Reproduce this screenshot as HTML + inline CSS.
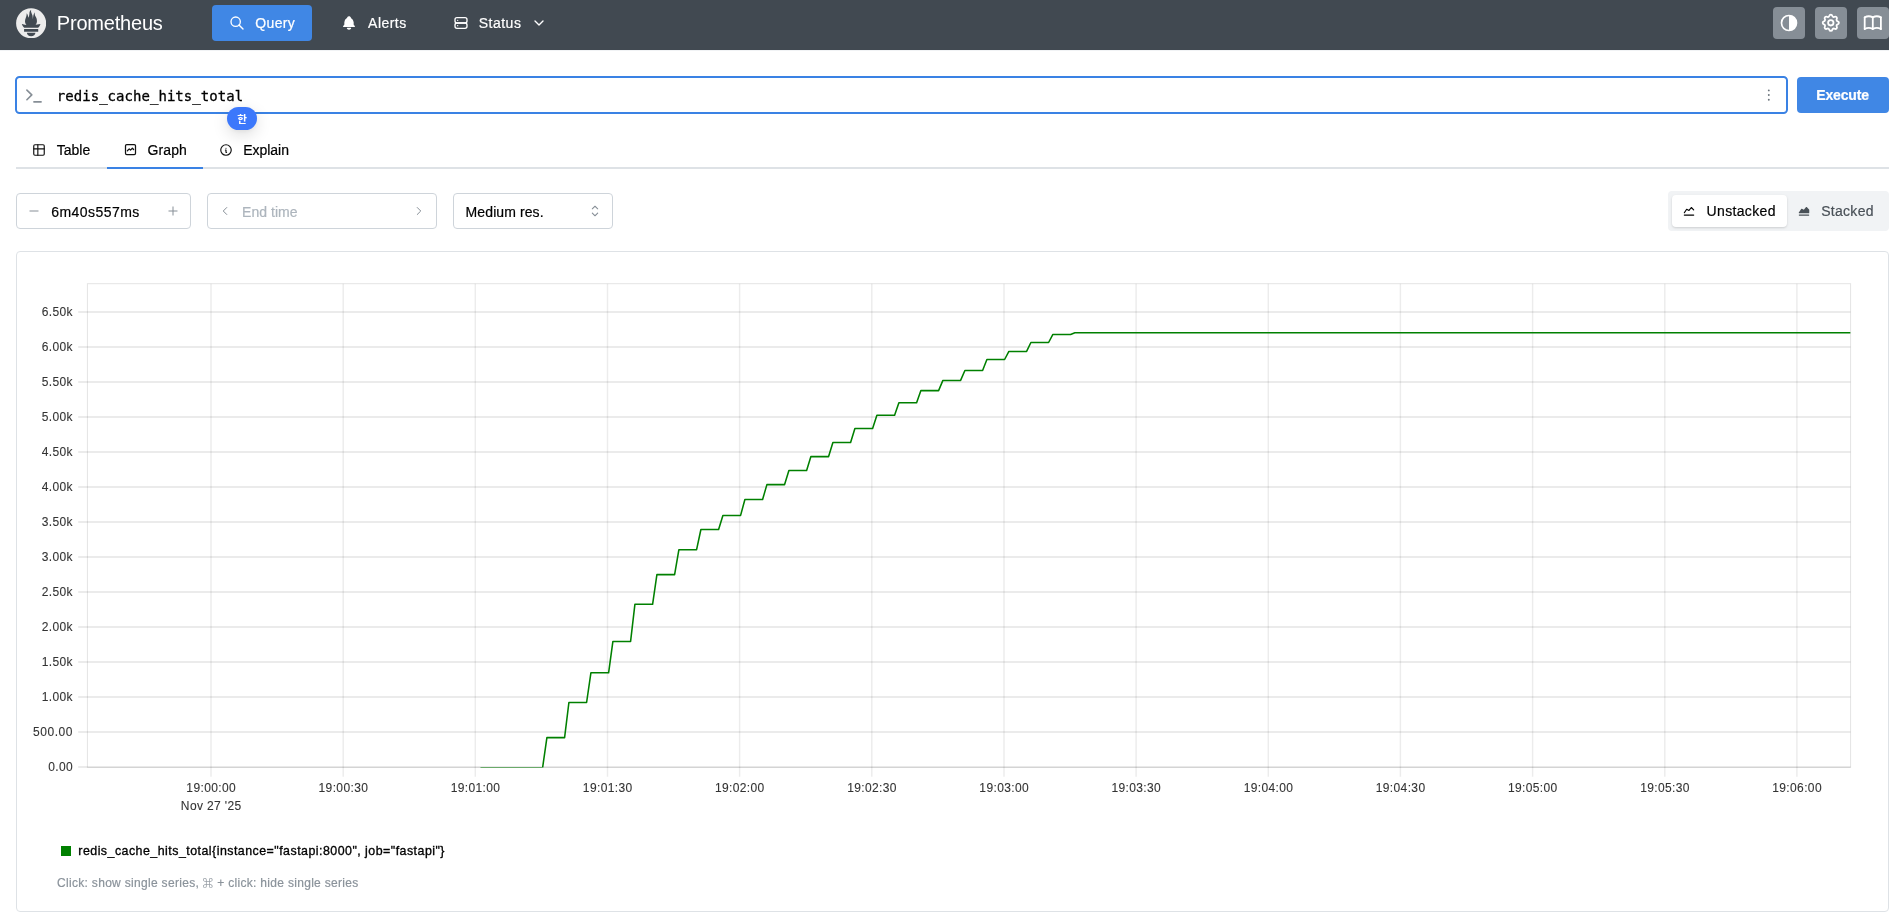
<!DOCTYPE html>
<html lang="en"><head><meta charset="utf-8"><title>Prometheus Time Series Collection and Processing Server</title>
<style>
html,body{margin:0;padding:0;background:#fff;}
body{width:1889px;height:918px;overflow:hidden;position:relative;font-family:"Liberation Sans", "Noto Sans CJK KR", sans-serif;-webkit-font-smoothing:antialiased;}
div,svg{box-sizing:border-box;}
.abs{position:absolute;}
</style></head><body><div id="root" style="position:absolute;left:0;top:0;width:1889px;height:918px;will-change:transform">
<div class="abs" style="left:0;top:49.6px;width:1889px;height:1.4px;background:#f1f3f5"></div>
<div class="abs" style="left:0;top:0;width:1889px;height:49.7px;background:rgb(65,73,81)"></div>
<svg style="position:absolute;left:15.8px;top:7.9px" width="30.3" height="30.3" viewBox="0 0 113.333 114"><path fill="#ececec" d="M56.667,0.667C25.372,0.667,0,26.036,0,57.332c0,31.295,25.372,56.666,56.667,56.666s56.666-25.371,56.666-56.666C113.333,26.036,87.961,0.667,56.667,0.667z M56.667,106.722c-8.904,0-16.123-5.948-16.123-13.283H72.79C72.79,100.773,65.571,106.722,56.667,106.722z M83.297,89.04H30.034v-9.658h53.264V89.04z M83.106,74.411h-52.92c-0.176-0.203-0.356-0.403-0.526-0.609c-5.452-6.62-6.736-10.076-7.983-13.598c-0.021-0.116,6.611,1.355,11.314,2.413c0,0,2.42,0.56,5.958,1.205c-3.397-3.982-5.414-9.044-5.414-14.218c0-11.359,8.712-21.285,5.569-29.308c3.059,0.249,6.331,6.456,6.552,16.161c3.252-4.494,4.613-12.701,4.613-17.733c0-5.21,3.433-11.262,6.867-11.469c-3.061,5.045,0.793,9.37,4.219,20.099c1.285,4.03,1.121,10.812,2.113,15.113C63.797,33.534,65.333,20.5,71,16c-2.5,5.667,0.37,12.758,2.333,16.167c3.167,5.5,5.087,9.667,5.087,17.548c0,5.284-1.951,10.259-5.242,14.148c3.742-0.702,6.326-1.335,6.326-1.335l12.152-2.371C91.657,60.156,89.891,67.418,83.106,74.411z"/></svg>
<div style="position:absolute;left:56.8px;top:13.27px;font-size:20px;line-height:20px;color:#fff;letter-spacing:-0.2px;font-weight:400;white-space:pre;-webkit-text-stroke:0.2px;-webkit-text-stroke:0;">Prometheus</div>
<div class="abs" style="left:212px;top:5px;width:100px;height:36px;border-radius:4px;background:#4087e5"></div>
<svg style="position:absolute;left:228.8px;top:15px;color:#fff;" width="16" height="16" viewBox="0 0 24 24" fill="none" stroke="currentColor" stroke-width="2" stroke-linecap="round" stroke-linejoin="round"><path d="M10 10m-7 0a7 7 0 1 0 14 0a7 7 0 1 0 -14 0"/><path d="M21 21l-6 -6"/></svg>
<div style="position:absolute;left:255.3px;top:16.05px;font-size:14px;line-height:14px;color:#fff;letter-spacing:0.35px;font-weight:400;white-space:pre;-webkit-text-stroke:0.2px;">Query</div>
<svg style="position:absolute;left:341px;top:15px;color:#fff;" width="16" height="16" viewBox="0 0 24 24" fill="none" stroke="currentColor" stroke-width="2" stroke-linecap="round" stroke-linejoin="round"><path stroke="none" fill="currentColor" d="M14.235 19c.865 0 1.322 1.024 .745 1.668a3.992 3.992 0 0 1 -2.98 1.332a3.992 3.992 0 0 1 -2.98 -1.332c-.552 -.616 -.158 -1.579 .634 -1.661l.11 -.006h4.471z"/><path stroke="none" fill="currentColor" d="M12 2c1.358 0 2.506 .903 2.875 2.141l.046 .171l.008 .043a8.013 8.013 0 0 1 4.024 6.069l.028 .287l.019 .289v2.931l.021 .136a3 3 0 0 0 1.143 1.847l.167 .117l.162 .099c.86 .487 .56 1.766 -.377 1.864l-.116 .006h-16c-1.028 0 -1.387 -1.364 -.493 -1.87a3 3 0 0 0 1.472 -2.063l.021 -.143l.001 -2.97a8 8 0 0 1 3.821 -6.454l.248 -.146l.01 -.043a3.003 3.003 0 0 1 2.562 -2.29l.182 -.017l.176 -.004z"/></svg>
<div style="position:absolute;left:368.1px;top:16.05px;font-size:14px;line-height:14px;color:#fff;letter-spacing:0.45px;font-weight:400;white-space:pre;-webkit-text-stroke:0.2px;">Alerts</div>
<svg style="position:absolute;left:452.9px;top:15px;color:#fff;" width="16" height="16" viewBox="0 0 24 24" fill="none" stroke="currentColor" stroke-width="2" stroke-linecap="round" stroke-linejoin="round"><path d="M3 4m0 3a3 3 0 0 1 3 -3h12a3 3 0 0 1 3 3v2a3 3 0 0 1 -3 3h-12a3 3 0 0 1 -3 -3z"/><path d="M3 12m0 3a3 3 0 0 1 3 -3h12a3 3 0 0 1 3 3v2a3 3 0 0 1 -3 3h-12a3 3 0 0 1 -3 -3z"/><path d="M7 8l0 .01"/><path d="M7 16l0 .01"/></svg>
<div style="position:absolute;left:478.7px;top:16.05px;font-size:14px;line-height:14px;color:#fff;letter-spacing:0.5px;font-weight:400;white-space:pre;-webkit-text-stroke:0.2px;">Status</div>
<svg style="position:absolute;left:531.25px;top:15px;color:#fff;" width="16" height="16" viewBox="0 0 24 24" fill="none" stroke="currentColor" stroke-width="2" stroke-linecap="round" stroke-linejoin="round"><path d="M6 9l6 6l6 -6"/></svg>
<div class="abs" style="left:1773px;top:7px;width:32px;height:32px;border-radius:4px;background:#868e96"></div>
<svg style="position:absolute;left:1779.0px;top:13.0px;color:#fff;" width="20" height="20" viewBox="0 0 24 24" fill="none" stroke="currentColor" stroke-width="2" stroke-linecap="round" stroke-linejoin="round"><path stroke="none" fill="currentColor" fill-rule="evenodd" d="M12 2a10 10 0 0 1 0 20a10 10 0 0 1 0 -20zM12 4a8 8 0 0 0 0 16z"/></svg>
<div class="abs" style="left:1815px;top:7px;width:32px;height:32px;border-radius:4px;background:#868e96"></div>
<svg style="position:absolute;left:1820.2px;top:12.2px;color:#fff;" width="21.6" height="21.6" viewBox="0 0 24 24" fill="none" stroke="currentColor" stroke-width="2" stroke-linecap="round" stroke-linejoin="round"><path d="M10.325 4.317c.426 -1.756 2.924 -1.756 3.35 0a1.724 1.724 0 0 0 2.573 1.066c1.543 -.94 3.31 .826 2.37 2.37a1.724 1.724 0 0 0 1.065 2.572c1.756 .426 1.756 2.924 0 3.35a1.724 1.724 0 0 0 -1.066 2.573c.94 1.543 -.826 3.31 -2.37 2.37a1.724 1.724 0 0 0 -2.572 1.065c-.426 1.756 -2.924 1.756 -3.35 0a1.724 1.724 0 0 0 -2.573 -1.066c-1.543 .94 -3.31 -.826 -2.37 -2.37a1.724 1.724 0 0 0 -1.065 -2.572c-1.756 -.426 -1.756 -2.924 0 -3.35a1.724 1.724 0 0 0 1.066 -2.573c-.94 -1.543 .826 -3.31 2.37 -2.37c1 .608 2.296 .07 2.572 -1.065z"/><path d="M9 12a3 3 0 1 0 6 0a3 3 0 0 0 -6 0"/></svg>
<div class="abs" style="left:1857px;top:7px;width:32px;height:32px;border-radius:4px;background:#868e96"></div>
<svg style="position:absolute;left:1862.2px;top:12.2px;color:#fff;" width="21.6" height="21.6" viewBox="0 0 24 24" fill="none" stroke="currentColor" stroke-width="2" stroke-linecap="round" stroke-linejoin="round"><path d="M3 19a9 9 0 0 1 9 0a9 9 0 0 1 9 0"/><path d="M3 6a9 9 0 0 1 9 0a9 9 0 0 1 9 0"/><path d="M3 6l0 13"/><path d="M12 6l0 13"/><path d="M21 6l0 13"/></svg>
<div class="abs" style="left:14.9px;top:75.7px;width:1772.9px;height:38.3px;border:2px solid #3a82e4;border-radius:4.5px;background:#fff"></div>
<svg class="abs" style="left:20px;top:84px" width="28" height="24" viewBox="20 84 28 24" fill="none" stroke="#868e96" stroke-width="1.6" stroke-linecap="round" stroke-linejoin="round"><path d="M26.9 90.1L31.8 94.9L26.9 99.7"/><path d="M33.9 101.9H41.1"/></svg>
<div class="abs" style="left:56.8px;top:85.7px;-webkit-text-stroke:0.3px #000;letter-spacing:0.04px;font-family:'DejaVu Sans Mono','Liberation Mono',monospace;font-size:14px;line-height:21px;color:#000;white-space:pre">redis_cache_hits_total</div>
<svg class="abs" style="left:1764px;top:86px" width="10" height="18" viewBox="0 0 10 18"><g fill="#6c757d"><circle cx="4.8" cy="4.4" r="0.95"/><circle cx="4.8" cy="9.0" r="0.95"/><circle cx="4.8" cy="13.8" r="0.95"/></g></svg>
<div class="abs" style="left:1797px;top:77px;width:92px;height:36px;border-radius:4px;background:#4087e5"></div>
<div style="position:absolute;left:1816.2px;top:88.05px;font-size:14px;line-height:14px;color:#fff;letter-spacing:-0.15px;font-weight:700;white-space:pre;-webkit-text-stroke:0.2px;">Execute</div>
<div class="abs" style="left:227px;top:106.8px;width:30px;height:23.2px;border-radius:12px;background:#3c78fb;box-shadow:0 5px 16px rgba(0,0,0,0.13),0 1px 5px rgba(0,0,0,0.06)"></div>
<div class="abs" style="left:227px;top:106.8px;width:30px;height:23.2px;line-height:23.2px;text-align:center;color:#fff;font-weight:700;font-size:10.5px;font-family:'Noto Sans CJK KR','NanumGothic',sans-serif">한</div>
<div class="abs" style="left:15.5px;top:166.7px;width:1873.5px;height:2px;background:#dee2e6"></div>
<div class="abs" style="left:107px;top:166.7px;width:96px;height:2px;background:#3a82e4"></div>
<svg style="position:absolute;left:32px;top:143px;color:#111;" width="14" height="14" viewBox="0 0 24 24" fill="none" stroke="currentColor" stroke-width="2" stroke-linecap="round" stroke-linejoin="round"><path d="M3 5a2 2 0 0 1 2 -2h14a2 2 0 0 1 2 2v14a2 2 0 0 1 -2 2h-14a2 2 0 0 1 -2 -2v-14z"/><path d="M3 10h18"/><path d="M10 3v18"/></svg>
<div style="position:absolute;left:56.8px;top:143.05px;font-size:14px;line-height:14px;color:#000;letter-spacing:0.0px;font-weight:400;white-space:pre;-webkit-text-stroke:0.2px;">Table</div>
<svg style="position:absolute;left:123.0px;top:141.9px;color:#111;" width="15" height="15" viewBox="0 0 24 24" fill="none" stroke="currentColor" stroke-width="2" stroke-linecap="round" stroke-linejoin="round"><path d="M4 18v-12a2 2 0 0 1 2 -2h12a2 2 0 0 1 2 2v12a2 2 0 0 1 -2 2h-12a2 2 0 0 1 -2 -2z"/><path d="M7 14l3 -3l2 2l3 -3l2 2"/></svg>
<div style="position:absolute;left:147.5px;top:143.05px;font-size:14px;line-height:14px;color:#000;letter-spacing:0.1px;font-weight:400;white-space:pre;-webkit-text-stroke:0.2px;">Graph</div>
<svg style="position:absolute;left:219px;top:143px;color:#111;" width="14" height="14" viewBox="0 0 24 24" fill="none" stroke="currentColor" stroke-width="2" stroke-linecap="round" stroke-linejoin="round"><path d="M3 12a9 9 0 1 0 18 0a9 9 0 0 0 -18 0"/><path d="M12 9h.01"/><path d="M11 12h1v4h1"/></svg>
<div style="position:absolute;left:243.2px;top:143.05px;font-size:14px;line-height:14px;color:#000;letter-spacing:-0.03px;font-weight:400;white-space:pre;-webkit-text-stroke:0.2px;">Explain</div>
<div class="abs" style="left:16px;top:193px;width:174.7px;height:35.7px;border:1px solid #ced4da;border-radius:4px;background:#fff"></div>
<svg style="position:absolute;left:27.1px;top:204px;color:#868e96;" width="14" height="14" viewBox="0 0 24 24" fill="none" stroke="currentColor" stroke-width="1.7" stroke-linecap="round" stroke-linejoin="round"><path d="M5 12l14 0"/></svg>
<div style="position:absolute;left:51.2px;top:205.35px;font-size:14px;line-height:14px;color:#000;letter-spacing:0.46px;font-weight:400;white-space:pre;-webkit-text-stroke:0.2px;">6m40s557ms</div>
<svg style="position:absolute;left:166.1px;top:204px;color:#868e96;" width="14" height="14" viewBox="0 0 24 24" fill="none" stroke="currentColor" stroke-width="1.7" stroke-linecap="round" stroke-linejoin="round"><path d="M12 5l0 14"/><path d="M5 12l14 0"/></svg>
<div class="abs" style="left:207.2px;top:193px;width:229.5px;height:35.7px;border:1px solid #ced4da;border-radius:4px;background:#fff"></div>
<svg style="position:absolute;left:218px;top:204.4px;color:#868e96;" width="14" height="14" viewBox="0 0 24 24" fill="none" stroke="currentColor" stroke-width="1.7" stroke-linecap="round" stroke-linejoin="round"><path d="M15 6l-6 6l6 6"/></svg>
<div style="position:absolute;left:242.0px;top:205.25px;font-size:14px;line-height:14px;color:#adb5bd;letter-spacing:0.05px;font-weight:400;white-space:pre;-webkit-text-stroke:0.2px;">End time</div>
<svg style="position:absolute;left:412.4px;top:204.2px;color:#868e96;" width="14" height="14" viewBox="0 0 24 24" fill="none" stroke="currentColor" stroke-width="1.7" stroke-linecap="round" stroke-linejoin="round"><path d="M9 6l6 6l-6 6"/></svg>
<div class="abs" style="left:453.2px;top:193px;width:159.5px;height:35.7px;border:1px solid #ced4da;border-radius:4px;background:#fff"></div>
<div style="position:absolute;left:465.6px;top:205.25px;font-size:14px;line-height:14px;color:#000;letter-spacing:0.1px;font-weight:400;white-space:pre;-webkit-text-stroke:0.2px;">Medium res.</div>
<svg class="abs" style="left:586px;top:202px;color:#868e96" width="18" height="18" viewBox="0 0 15 15" fill="currentColor"><path fill-rule="evenodd" clip-rule="evenodd" d="M4.93179 5.43179C4.75605 5.60753 4.75605 5.89245 4.93179 6.06819C5.10753 6.24392 5.39245 6.24392 5.56819 6.06819L7.49999 4.13638L9.43179 6.06819C9.60753 6.24392 9.89245 6.24392 10.0682 6.06819C10.2439 5.89245 10.2439 5.60753 10.0682 5.43179L7.81819 3.18179C7.73379 3.0974 7.61933 3.04999 7.49999 3.04999C7.38064 3.04999 7.26618 3.0974 7.18179 3.18179L4.93179 5.43179ZM10.0682 9.56819C10.2439 9.39245 10.2439 9.10753 10.0682 8.93179C9.89245 8.75606 9.60753 8.75606 9.43179 8.93179L7.49999 10.8636L5.56819 8.93179C5.39245 8.75606 5.10753 8.75606 4.93179 8.93179C4.75605 9.10753 4.75605 9.39245 4.93179 9.56819L7.18179 11.8182C7.35753 11.9939 7.64245 11.9939 7.81819 11.8182L10.0682 9.56819Z"/></svg>
<div class="abs" style="left:1668px;top:191px;width:221px;height:40px;border-radius:4px;background:#f1f3f5"></div>
<div class="abs" style="left:1672px;top:195px;width:115px;height:32px;border-radius:4px;background:#fff;box-shadow:0 1px 3px rgba(0,0,0,0.1),0 1px 2px rgba(0,0,0,0.06)"></div>
<svg style="position:absolute;left:1682.3px;top:204.3px;color:#000;" width="14" height="14" viewBox="0 0 24 24" fill="none" stroke="currentColor" stroke-width="2" stroke-linecap="round" stroke-linejoin="round"><path d="M4 19l16 0"/><path d="M4 15l4 -6l4 2l4 -5l4 4"/></svg>
<div style="position:absolute;left:1706.6px;top:204.15px;font-size:14px;line-height:14px;color:#000;letter-spacing:0.34px;font-weight:400;white-space:pre;-webkit-text-stroke:0.2px;">Unstacked</div>
<svg style="position:absolute;left:1797.2px;top:204.3px;color:#495057;" width="14" height="14" viewBox="0 0 24 24" fill="none" stroke="currentColor" stroke-width="2" stroke-linecap="round" stroke-linejoin="round"><path stroke="none" fill="currentColor" d="M20 18a1 1 0 0 1 .117 1.993l-.117 .007h-16a1 1 0 0 1 -.117 -1.993l.117 -.007h16z"/><path stroke="none" fill="currentColor" d="M15.22 5.375a1 1 0 0 1 1.393 -.165l.094 .083l4 4a1 1 0 0 1 .284 .576l.009 .131v5a1 1 0 0 1 -.883 .993l-.117 .007h-16.022l-.11 -.009l-.11 -.02l-.107 -.034l-.105 -.046l-.1 -.059l-.094 -.07l-.06 -.055l-.072 -.082l-.064 -.089l-.054 -.096l-.016 -.035l-.04 -.103l-.027 -.106l-.015 -.108l-.004 -.11l.009 -.11l.019 -.105c.01 -.04 .022 -.077 .035 -.112l.046 -.105l.059 -.1l4 -6a1 1 0 0 1 1.165 -.39l.114 .05l3.277 1.638l3.495 -4.369z"/></svg>
<div style="position:absolute;left:1821.2px;top:204.15px;font-size:14px;line-height:14px;color:#495057;letter-spacing:0.29px;font-weight:400;white-space:pre;-webkit-text-stroke:0.2px;">Stacked</div>
<div class="abs" style="left:16px;top:251.4px;width:1873px;height:660.6px;border:1px solid #dee2e6;border-radius:4px;background:#fff"></div>
<svg class="abs" style="left:0;top:240px" width="1889" height="600" viewBox="0 240 1889 600"><g stroke="rgba(0,0,0,0.078)" stroke-width="1.8" fill="none"><path d="M78.2 767.0H1850.6"/><path d="M78.2 732.0H1850.6"/><path d="M78.2 697.0H1850.6"/><path d="M78.2 662.0H1850.6"/><path d="M78.2 627.0H1850.6"/><path d="M78.2 592.0H1850.6"/><path d="M78.2 557.0H1850.6"/><path d="M78.2 522.0H1850.6"/><path d="M78.2 487.0H1850.6"/><path d="M78.2 452.0H1850.6"/><path d="M78.2 417.0H1850.6"/><path d="M78.2 382.0H1850.6"/><path d="M78.2 347.0H1850.6"/><path d="M78.2 312.0H1850.6"/></g><g stroke="rgba(0,0,0,0.075)" stroke-width="1.5" fill="none"><path d="M211.0 283.7V776.8"/><path d="M343.2 283.7V776.8"/><path d="M475.3 283.7V776.8"/><path d="M607.5 283.7V776.8"/><path d="M739.6 283.7V776.8"/><path d="M871.8 283.7V776.8"/><path d="M1004.0 283.7V776.8"/><path d="M1136.1 283.7V776.8"/><path d="M1268.3 283.7V776.8"/><path d="M1400.4 283.7V776.8"/><path d="M1532.6 283.7V776.8"/><path d="M1664.8 283.7V776.8"/><path d="M1796.9 283.7V776.8"/></g><rect x="87.4" y="283.7" width="1763.2" height="483.7" fill="none" stroke="rgba(0,0,0,0.11)" stroke-width="1"/><clipPath id="pc"><rect x="87.4" y="283.7" width="1763.2" height="483.9"/></clipPath><path clip-path="url(#pc)" d="M480.5 767.7H542.6L546.9 737.6H564.6L568.9 702.5H586.6L590.9 672.8H608.6L612.9 641.4H630.6L634.9 604.3H652.6L656.9 574.6H674.6L678.9 549.7H696.6L700.9 529.5H718.6L722.9 515.4H740.6L744.9 499.5H762.6L766.9 484.6H784.6L788.9 470.5H806.6L810.9 456.6H828.6L832.9 442.5H850.6L854.9 428.4H872.6L876.9 415.3H894.6L898.9 402.7H916.6L920.9 390.6H938.6L942.9 380.4H960.6L964.9 370.5H982.6L986.9 359.5H1004.6L1008.9 351.4H1026.6L1030.9 342.5H1048.6L1052.9 334.4H1070.6L1074.9 332.8H1850.6" fill="none" stroke="#008000" stroke-width="1.55" stroke-linejoin="round"/><g font-family='"Liberation Sans", sans-serif' font-size="12" fill="#333" stroke="#333" stroke-width="0.1" letter-spacing="0.37"><text x="73.0" y="771.3" text-anchor="end">0.00</text><text x="73.0" y="736.3" text-anchor="end" letter-spacing="0.55">500.00</text><text x="73.0" y="701.3" text-anchor="end">1.00k</text><text x="73.0" y="666.3" text-anchor="end">1.50k</text><text x="73.0" y="631.3" text-anchor="end">2.00k</text><text x="73.0" y="596.3" text-anchor="end">2.50k</text><text x="73.0" y="561.3" text-anchor="end">3.00k</text><text x="73.0" y="526.3" text-anchor="end">3.50k</text><text x="73.0" y="491.3" text-anchor="end">4.00k</text><text x="73.0" y="456.3" text-anchor="end">4.50k</text><text x="73.0" y="421.3" text-anchor="end">5.00k</text><text x="73.0" y="386.3" text-anchor="end">5.50k</text><text x="73.0" y="351.3" text-anchor="end">6.00k</text><text x="73.0" y="316.3" text-anchor="end">6.50k</text><text x="211.2" y="792.0" text-anchor="middle">19:00:00</text><text x="343.4" y="792.0" text-anchor="middle">19:00:30</text><text x="475.5" y="792.0" text-anchor="middle">19:01:00</text><text x="607.7" y="792.0" text-anchor="middle">19:01:30</text><text x="739.8" y="792.0" text-anchor="middle">19:02:00</text><text x="872.0" y="792.0" text-anchor="middle">19:02:30</text><text x="1004.2" y="792.0" text-anchor="middle">19:03:00</text><text x="1136.3" y="792.0" text-anchor="middle">19:03:30</text><text x="1268.5" y="792.0" text-anchor="middle">19:04:00</text><text x="1400.6" y="792.0" text-anchor="middle">19:04:30</text><text x="1532.8" y="792.0" text-anchor="middle">19:05:00</text><text x="1665.0" y="792.0" text-anchor="middle">19:05:30</text><text x="1797.1" y="792.0" text-anchor="middle">19:06:00</text><text x="211.2" y="810.2" text-anchor="middle">Nov 27 '25</text></g></svg>
<div class="abs" style="left:61px;top:846px;width:10.2px;height:10.2px;background:#008000"></div>
<div style="position:absolute;left:78.3px;top:844.80px;font-size:12.4px;line-height:12.4px;color:#000;letter-spacing:0.475px;font-weight:400;white-space:pre;-webkit-text-stroke:0.2px;-webkit-text-stroke:0.32px #000;">redis_cache_hits_total{instance="fastapi:8000", job="fastapi"}</div>
<div style="position:absolute;left:57.0px;top:876.84px;font-size:12px;line-height:12px;color:#8b939b;letter-spacing:0.31px;font-weight:400;white-space:pre;-webkit-text-stroke:0.2px;font-family:"Liberation Sans","DejaVu Sans",sans-serif;-webkit-text-stroke:0;">Click: show single series, <span style="font-size:10.2px;letter-spacing:0.6px">⌘</span> + click: hide single series</div>
</div></body></html>
